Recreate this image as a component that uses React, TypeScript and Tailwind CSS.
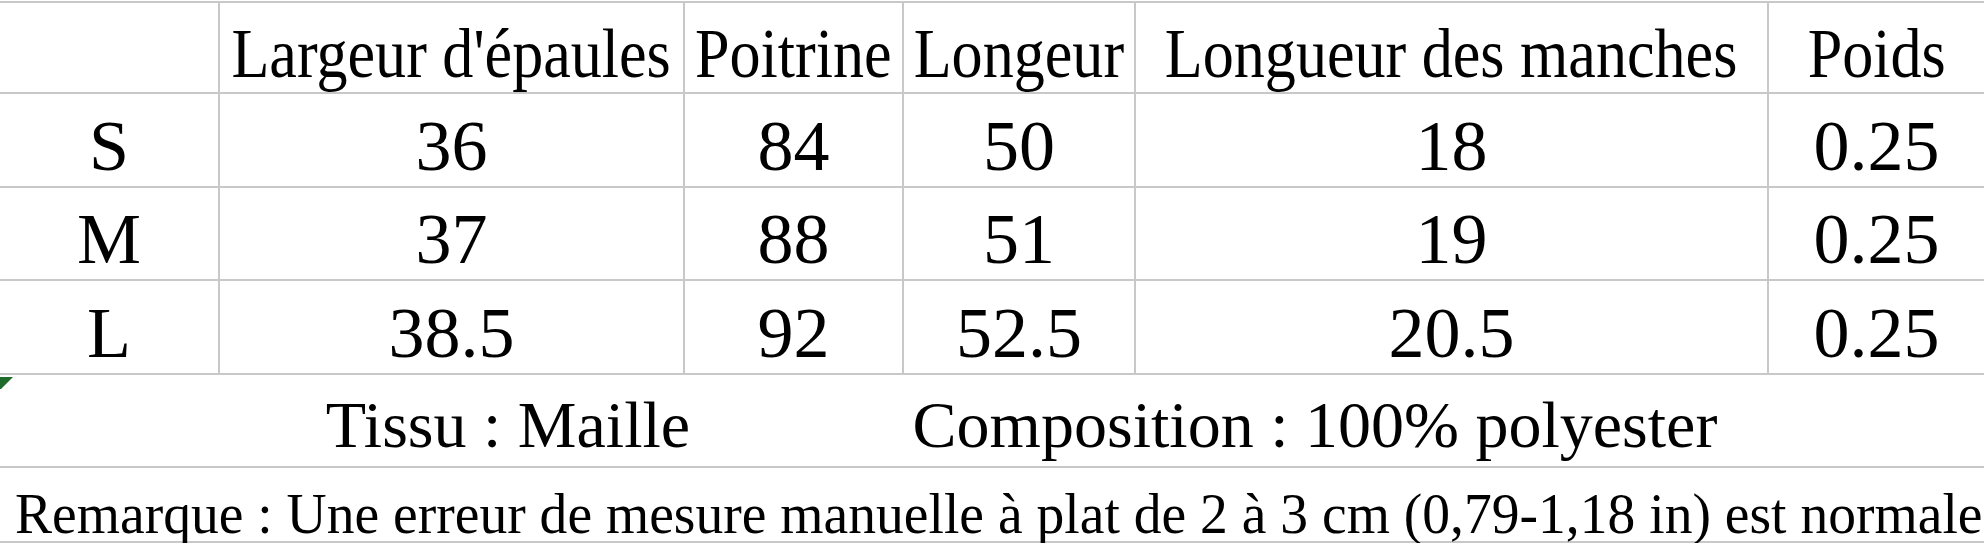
import React from "react";

const font = { fontFamily: '"Liberation Serif", "Times New Roman", serif' };

const cols = "grid grid-cols-[220px_465px_219px_232px_633px_215px]";

function Cell({ children, last, head }: { children?: React.ReactNode; last?: boolean; head?: boolean }) {
  return (
    <div
      className={
        "flex items-center justify-center border-b-2 border-[#c8c8c8] " +
        (last ? "" : "border-r-2 ") +
        (head ? "pt-[13px]" : "pt-[11px]")
      }
    >
      {head ? (
        <span className="inline-block whitespace-nowrap text-[69px] leading-none scale-x-[0.9]">{children}</span>
      ) : (
        <span className="inline-block whitespace-nowrap text-[72px] leading-none">{children}</span>
      )}
    </div>
  );
}

const headers = ["", "Largeur d'épaules", "Poitrine", "Longeur", "Longueur des manches", "Poids"];
const rows = [
  ["S", "36", "84", "50", "18", "0.25"],
  ["M", "37", "88", "51", "19", "0.25"],
  ["L", "38.5", "92", "52.5", "20.5", "0.25"],
];
const heights = ["h-[94px]", "h-[93px]", "h-[94px]"];

export default function App() {
  return (
    <div className="w-[1984px] h-[543px] bg-white text-black overflow-hidden" style={font}>
      <div className="mt-px border-t-2 border-[#c8c8c8]">
        <div className={cols + " h-[91px]"}>
          {headers.map((h, i) => (
            <Cell key={i} head last={i === headers.length - 1}>
              {h}
            </Cell>
          ))}
        </div>
        {rows.map((r, ri) => (
          <div key={ri} className={cols + " " + heights[ri]}>
            {r.map((c, ci) => (
              <Cell key={ci} last={ci === r.length - 1}>
                {c}
              </Cell>
            ))}
          </div>
        ))}
        <div className="relative flex h-[93px] items-center border-b-2 border-[#c8c8c8] pt-[9px]">
          <svg className="absolute left-0 top-[2px]" width="13" height="12" viewBox="0 0 13 12">
            <polygon points="0,0 13,0 1,12 0,12" fill="#1f6b2c" />
          </svg>
          <div className="ml-[200px] flex w-[616px] justify-center">
            <span className="whitespace-nowrap text-[66px] leading-none">Tissu : Maille</span>
          </div>
          <div className="flex w-[998px] justify-center">
            <span className="whitespace-nowrap text-[66px] leading-none">Composition : 100% polyester</span>
          </div>
        </div>
        <div className="flex h-[75px] items-center border-b-2 border-[#c8c8c8] pl-[15px] pt-[17px]">
          <span className="inline-block origin-left whitespace-nowrap text-[57px] leading-none scale-x-[0.975]">
            Remarque : Une erreur de mesure manuelle à plat de 2 à 3 cm (0,79-1,18 in) est normale
          </span>
        </div>
      </div>
    </div>
  );
}
